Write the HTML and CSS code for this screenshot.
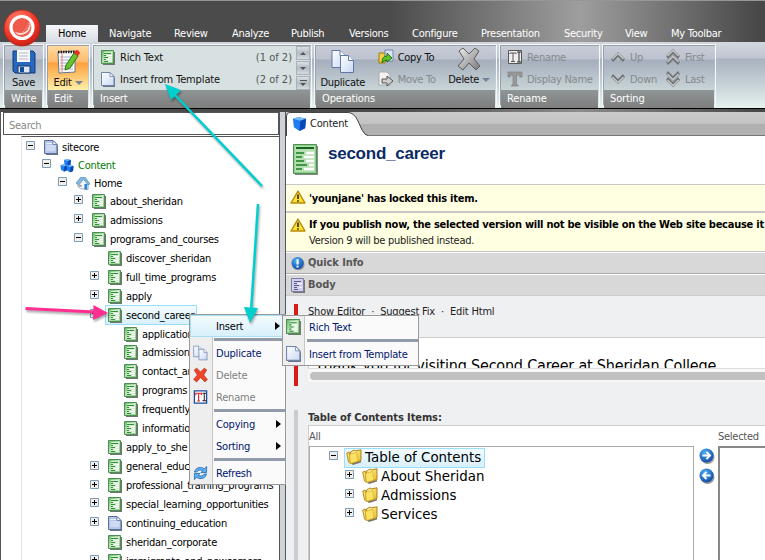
FILE: index.html
```
<!DOCTYPE html>
<html lang="en">
<head>
<meta charset="utf-8">
<title>Content Editor</title>
<link rel="stylesheet" href="styles.css">
</head>
<body>
<svg class="defs" aria-hidden="true">
  <defs>
    <linearGradient id="gGreen" x1="0" y1="0" x2="1" y2="1"><stop offset="0" stop-color="#5fb860"/><stop offset=".45" stop-color="#b9e2b5"/><stop offset="1" stop-color="#8cc98a"/></linearGradient>
    <linearGradient id="gPage" x1="0" y1="0" x2="1" y2="1"><stop offset="0" stop-color="#fff"/><stop offset="1" stop-color="#c9d8f2"/></linearGradient>
    <linearGradient id="gFolder" x1="0" y1="0" x2="1" y2="1"><stop offset="0" stop-color="#fff6a8"/><stop offset="1" stop-color="#e8b71c"/></linearGradient>
    <linearGradient id="gMetal" x1="0" y1="0" x2="1" y2="1"><stop offset="0" stop-color="#f0f0f0"/><stop offset="1" stop-color="#777"/></linearGradient>
    <radialGradient id="gBall" cx=".4" cy=".3" r=".8"><stop offset="0" stop-color="#4fb2f5"/><stop offset="1" stop-color="#083f9e"/></radialGradient>
    <radialGradient id="gRed" cx=".4" cy=".3" r=".8"><stop offset="0" stop-color="#ff8d78"/><stop offset=".6" stop-color="#f03526"/><stop offset="1" stop-color="#b81610"/></radialGradient>
    <symbol id="doc" viewBox="0 0 14 15"><path d="M2 2h12v13H2z" fill="#6d756d"/><path d="M.5.5h12v13H.5z" fill="url(#gGreen)" stroke="#4f8e54"/><path d="M3 2h8v10H3z" fill="#d5ecd1"/><path d="M3 3.500h7M3 5.500h2M3 7.500h4M3 9.500h2M3 11.500h4" stroke="#2c9139"/><path d="M6 5.500h5M8 7.500h3M6 9.500h5M8 11.500h3" stroke="#fff"/></symbol>
    <symbol id="bigdoc" viewBox="0 0 25 31"><path d="M2 2h23v29H2z" fill="#858a85"/><path d="M.5.5h23v29H.5z" fill="#b5dfb0" stroke="#4b9153"/><path d="M1.500 1.500h21v27h-21z" fill="none" stroke="#8fce8a"/><path d="M3 4h18" stroke="#14651d" stroke-width="2"/><path d="M3 9h8M3 13h6M3 17h8M3 21h11M3 25h6" stroke="#17811f" stroke-width="1.300"/><path d="M13 9h8M11 13h10M13 17h8M16 21h5M11 25h10" stroke="#fff" stroke-width="2.600"/></symbol>
    <symbol id="violet" viewBox="0 0 14 15"><path d="M2 2h12v13H2z" fill="#777"/><path d="M.5.5h12v13H.5z" fill="#d0d0ea" stroke="#7c7ca5"/><path d="M3 3.500h7M3 5.500h3M3 7.500h5M3 9.500h3M3 11.500h4" stroke="#5c5c8c"/><path d="M7 5.500h4M8 9.500h3" stroke="#fff"/></symbol>
    <symbol id="page" viewBox="0 0 14 15"><path d="M2 2h9l3 4v9H2z" fill="#6c7485"/><path d="M.5.5H9l4 4v9H.5z" fill="url(#gPage)" stroke="#7184a8"/><path d="M9 .5v4h4z" fill="#fff" stroke="#7184a8" stroke-width=".8"/></symbol>
    <symbol id="bluepage" viewBox="0 0 14 15"><path d="M2 2h9l3 4v9H2z" fill="#6c7485"/><path d="M.5.5H9l4 4v9H.5z" fill="#b5c6e8" stroke="#5a6e9a"/><path d="M2.500 3.500H8M2.500 6h9M2.500 8h9M2.500 10h9" stroke="#e8effb"/><path d="M9 .5v4h4z" fill="#fff" stroke="#5a6e9a" stroke-width=".8"/></symbol>
    <symbol id="cube" viewBox="0 0 16 16"><path d="M1 3l6-2 8 2-1 10-6 3-6-4z" fill="#1c7cf0"/><path d="M1 3l6-2 8 2-6 2z" fill="#77bdfc"/><path d="M9 5l6-2-1 10-6 3z" fill="#0847b5"/></symbol>
    <symbol id="house" viewBox="0 0 15 15"><path d="M2 7l6-5 5 5v7l-8-1-3-2z" fill="#f5f7fa" stroke="#8b98a8" stroke-width=".8"/><path d="M0 7l5-6 5 0 5 7-2 1-5-6-5 6z" fill="#83b8e5" stroke="#567fae" stroke-width=".7"/><path d="M9 8h3v6H9z" fill="#2c83d8"/><path d="M3 9h3v2H3z" fill="#999"/></symbol>
    <symbol id="plus" viewBox="0 0 9 9"><path d="M.5.5h8v8h-8z" fill="#f0eee8" stroke="#7f9bb8"/><path d="M2 4.500h5M4.500 2v5" stroke="#000"/></symbol>
    <symbol id="minus" viewBox="0 0 9 9"><path d="M.5.5h8v8h-8z" fill="#f0eee8" stroke="#7f9bb8"/><path d="M2 4.500h5" stroke="#000"/></symbol>
    <symbol id="folder" viewBox="0 0 16 16"><path d="M5 14.500l10-2.500v1.500L7 16z" fill="#777"/><path d="M.7 4L3.200 3l1.300 11.500L2.500 13z" fill="#f7dc6a" stroke="#a6780b" stroke-width=".8"/><path d="M4.500 3l3.500-2 1.500.8L15 .8v10.700L5.500 14.500z" fill="url(#gFolder)" stroke="#a6780b" stroke-width=".9"/><path d="M3.500 5.500l7-2 1.500 8.500-7.500 2.500z" fill="#fbe262" stroke="#d2a725" stroke-width=".6"/></symbol>
    <symbol id="warn" viewBox="0 0 16 15"><path d="M8 1.200L15 13H1z" fill="#fbe22b" stroke="#b98a0d" stroke-width="1.400" stroke-linejoin="round"/><path d="M8 4.500v4.500M8 10.300v1.500" stroke="#222" stroke-width="1.600"/></symbol>
    <symbol id="dup" viewBox="0 0 24 24"><g stroke="#5e79a6" fill="url(#gPage)"><path d="M1 1h8l5 5v12H1z"/><path d="M9 1v5h5" fill="#fff"/><path d="M9.500 6h8l5 5v12h-13z"/><path d="M17.500 6v5h5" fill="#fff"/></g></symbol>
    <symbol id="cross" viewBox="0 0 24 24"><path d="M2 4l4-3 6 6 6-6 4 3-5 8 6 7-4 4-7-7-6 7-5-4 6-7z" stroke-width="1"/></symbol>
    <symbol id="chev" viewBox="0 0 14 10"><path d="M0 7l7-7 7 7-2 3-5-5-5 5z" fill="#707478"/><path d="M1.500 7L7 1.500 12.500 7" fill="none" stroke="#ccc" stroke-width="1.300"/></symbol>
    <symbol id="ball" viewBox="0 0 16 16"><circle cx="8.500" cy="9" r="7" fill="#999"/><circle cx="7.500" cy="7.500" r="7" fill="url(#gBall)"/></symbol>
    <symbol id="tri" viewBox="0 0 5 8"><path d="M0 0l5 4-5 4z" fill="#000"/></symbol>
  </defs>
</svg>

<header class="top">
  <nav class="tabs">
    <span class="tab on">Home</span><span class="tab">Navigate</span><span class="tab">Review</span><span class="tab">Analyze</span><span class="tab">Publish</span><span class="tab">Versions</span><span class="tab">Configure</span><span class="tab">Presentation</span><span class="tab">Security</span><span class="tab">View</span><span class="tab">My Toolbar</span>
  </nav>
  <svg class="logo" viewBox="0 0 38 38"><circle cx="19" cy="19" r="18" fill="url(#gRed)" stroke="#a5251b" stroke-width=".7"/><circle cx="19" cy="18.500" r="11" fill="#ee5b4c" stroke="#fff" stroke-width="3.200"/><path d="M27 11q3 13-9 15-4 0-6-3 9 3 13-3 2-4 2-9z" fill="#fff" opacity=".8"/><path d="M20 23l4-4 2-5" fill="none" stroke="#f6b7ad" stroke-dasharray="1.500 1"/></svg>
</header>

<section class="ribbon">
  <div class="chunk write">
    <div class="chunk-body center">
      <svg class="big" viewBox="0 0 24 25"><path d="M1 2h20l2 2v20H3l-2-2z" fill="#2767bd" stroke="#123b7b"/><path d="M5 1h13v12H5z" fill="#f4f6f8"/><path d="M7 4h9M7 7h9M7 10h9" stroke="#b5bbc4"/><path d="M6 17h12v7H6z" fill="#dce4ee" stroke="#12396f"/><path d="M8 18h4v5H8z" fill="#164c9a"/></svg>
      <span>Save</span>
    </div>
    <div class="chunk-label">Write</div>
  </div>
  <div class="chunk edit">
    <div class="chunk-body center">
      <svg class="big" viewBox="0 0 24 25"><path d="M2 3l17-1v21l-16 1z" fill="#fff" stroke="#65758f"/><path d="M4 8h13M4 11h13M4 14h13M4 17h13M4 20h13" stroke="#9ab0d5"/><path d="M6 3v20" stroke="#e77"/><path d="M2 3h17" stroke="#222" stroke-width="2.500" stroke-dasharray="1.500 1"/><path d="M10 16l8-12 4 3-8 12-5 2z" fill="#66c430" stroke="#2b7512"/><path d="M18 4l2-3q3 0 4 3l-2 3z" fill="#e33323"/></svg>
      <span class="drop">Edit</span>
    </div>
    <div class="chunk-label">Edit</div>
  </div>
  <div class="chunk insert">
    <div class="chunk-body list">
      <div class="options">
        <div class="opt"><svg><use href="#doc"/></svg><span>Rich Text</span><i>(1 of 2)</i></div>
        <div class="opt"><svg><use href="#page"/></svg><span>Insert from Template</span><i>(2 of 2)</i></div>
      </div>
      <div class="scroller"><b class="up"></b><b class="down"></b><b class="more"></b></div>
    </div>
    <div class="chunk-label">Insert</div>
  </div>
  <div class="chunk ops">
    <div class="chunk-body">
      <div class="tall duplicate"><svg class="big"><use href="#dup"/></svg><span>Duplicate</span></div>
      <div class="pair">
        <div><svg viewBox="0 0 16 16"><path d="M1 4h6v10H1z" fill="#f3d145" stroke="#a57c0c"/><path d="M7 1h8v11H7z" fill="#dbe5fa" stroke="#7184a8"/><path d="M4 14q0-7 5-7V4l5 5-5 4v-2q-3 0-5 3z" fill="#5cc42b" stroke="#277511"/></svg><span>Copy To</span></div>
        <div class="off"><svg viewBox="0 0 16 16"><path d="M1 1h8l3 3v10H1z" fill="#f2f2f2" stroke="#aaa"/><path d="M4 8h5V5l6 5-6 5v-3H4z" fill="#ccc" stroke="#555"/></svg><span>Move To</span></div>
      </div>
      <div class="tall delete"><svg class="big" fill="url(#gMetal)" stroke="#5d5d5d"><use href="#cross"/></svg><span class="drop">Delete</span></div>
    </div>
    <div class="chunk-label">Operations</div>
  </div>
  <div class="chunk rename">
    <div class="chunk-body">
      <div class="pair">
        <div class="off"><svg viewBox="0 0 16 16"><path d="M1.500 1.500h13v13h-13z" fill="#eee" stroke="#555"/><path d="M3 5V4h6v1M6 4v8M4 12.500h4" fill="none" stroke="#555"/><path d="M10 3h4M12 3v10M10 13h4" stroke="#222" fill="none"/></svg><span>Rename</span></div>
        <div class="off"><svg viewBox="0 0 16 16"><path d="M1 1h14v5h-2l-1-2H9.500v9l2 2H4l2-2V4H4L3 6H1z" fill="#999" stroke="#777" stroke-width=".6"/></svg><span>Display Name</span></div>
      </div>
    </div>
    <div class="chunk-label">Rename</div>
  </div>
  <div class="chunk sorting">
    <div class="chunk-body">
      <div class="pair">
        <div class="off"><svg viewBox="0 0 16 16"><use href="#chev" x="1" y="3" width="14" height="10"/></svg><span>Up</span></div>
        <div class="off"><svg class="flip" viewBox="0 0 16 16"><use href="#chev" x="1" y="3" width="14" height="10"/></svg><span>Down</span></div>
      </div>
      <div class="pair">
        <div class="off"><svg viewBox="0 0 16 16"><use href="#chev" x="1" y="0" width="14" height="10"/><use href="#chev" x="1" y="6" width="14" height="10"/></svg><span>First</span></div>
        <div class="off"><svg class="flip" viewBox="0 0 16 16"><use href="#chev" x="1" y="0" width="14" height="10"/><use href="#chev" x="1" y="6" width="14" height="10"/></svg><span>Last</span></div>
      </div>
    </div>
    <div class="chunk-label">Sorting</div>
  </div>
</section>
<div class="strip"></div>

<main class="work">
  <aside class="left">
    <div class="search">Search</div>
    <div class="tree">
      <div class="node l0 s"><svg class="ex"><use href="#minus"/></svg><svg class="ic"><use href="#bluepage"/></svg><span>sitecore</span></div>
      <div class="node l1 s"><svg class="ex"><use href="#minus"/></svg><svg class="ic" viewBox="0 0 16 16"><use href="#cube" x="4" y="0" width="9" height="9"/><use href="#cube" x="0" y="6" width="9" height="9"/><use href="#cube" x="7" y="7" width="9" height="9"/></svg><span class="green">Content</span></div>
      <div class="node l2 s"><svg class="ex"><use href="#minus"/></svg><svg class="ic"><use href="#house"/></svg><span>Home</span></div>
      <div class="node l3"><svg class="ex"><use href="#plus"/></svg><svg class="ic"><use href="#doc"/></svg><span>about_sheridan</span></div>
      <div class="node l3"><svg class="ex"><use href="#plus"/></svg><svg class="ic"><use href="#doc"/></svg><span>admissions</span></div>
      <div class="node l3"><svg class="ex"><use href="#minus"/></svg><svg class="ic"><use href="#doc"/></svg><span>programs_and_courses</span></div>
      <div class="node l4"><svg class="ex"></svg><svg class="ic"><use href="#doc"/></svg><span>discover_sheridan</span></div>
      <div class="node l4"><svg class="ex"><use href="#plus"/></svg><svg class="ic"><use href="#doc"/></svg><span>full_time_programs</span></div>
      <div class="node l4"><svg class="ex"><use href="#plus"/></svg><svg class="ic"><use href="#doc"/></svg><span>apply</span></div>
      <div class="node l4 sel"><svg class="ex"><use href="#minus"/></svg><div class="hot"><svg class="ic"><use href="#doc"/></svg><span>second_career</span></div></div>
      <div class="node l5"><svg class="ex"></svg><svg class="ic"><use href="#doc"/></svg><span>application</span></div>
      <div class="node l5"><svg class="ex"></svg><svg class="ic"><use href="#doc"/></svg><span>admission_</span></div>
      <div class="node l5"><svg class="ex"></svg><svg class="ic"><use href="#doc"/></svg><span>contact_and</span></div>
      <div class="node l5"><svg class="ex"></svg><svg class="ic"><use href="#doc"/></svg><span>programs</span></div>
      <div class="node l5"><svg class="ex"></svg><svg class="ic"><use href="#doc"/></svg><span>frequently</span></div>
      <div class="node l5"><svg class="ex"></svg><svg class="ic"><use href="#doc"/></svg><span>information</span></div>
      <div class="node l4"><svg class="ex"></svg><svg class="ic"><use href="#doc"/></svg><span>apply_to_she</span></div>
      <div class="node l4"><svg class="ex"><use href="#plus"/></svg><svg class="ic"><use href="#doc"/></svg><span>general_educ</span></div>
      <div class="node l4"><svg class="ex"><use href="#plus"/></svg><svg class="ic"><use href="#doc"/></svg><span>professional_training_programs</span></div>
      <div class="node l4"><svg class="ex"><use href="#plus"/></svg><svg class="ic"><use href="#doc"/></svg><span>special_learning_opportunities</span></div>
      <div class="node l4"><svg class="ex"><use href="#plus"/></svg><svg class="ic"><use href="#bluepage"/></svg><span>continuing_education</span></div>
      <div class="node l4"><svg class="ex"></svg><svg class="ic"><use href="#doc"/></svg><span>sheridan_corporate</span></div>
      <div class="node l4"><svg class="ex"><use href="#plus"/></svg><svg class="ic"><use href="#doc"/></svg><span>immigrants_and_newcomers</span></div>
    </div>
  </aside>
  <div class="splitter"></div>
  <section class="right">
    <div class="tabbar">
      <svg class="tabshape" viewBox="0 0 84 24"><path d="M.5 24V4Q.5.5 4 .5H62Q68 .5 72 9L76 18Q79 23.500 82 23.500V24z" fill="#fff"/><path d="M.5 24V4Q.5.5 4 .5H62Q68 .5 72 9L76 18Q79 23.500 82 23.500" fill="none" stroke="#444"/></svg>
      <div class="tabtext"><svg><use href="#cube"/></svg><span>Content</span></div>
    </div>
    <div class="title"><svg><use href="#bigdoc"/></svg><h1>second_career</h1></div>
    <div class="note one"><svg><use href="#warn"/></svg><strong>'younjane' has locked this item.</strong></div>
    <div class="note two"><svg><use href="#warn"/></svg><div><strong>If you publish now, the selected version will not be visible on the Web site because it</strong><p>Version 9 will be published instead.</p></div></div>
    <div class="bar quick"><svg viewBox="0 0 16 16"><use href="#ball"/><path d="M7.500 3v6M7.500 10.500v2" stroke="#fff" stroke-width="2.400"/></svg>Quick Info</div>
    <div class="bar body"><svg><use href="#violet"/></svg>Body</div>
    <div class="field rich">
      <div class="links"><span>Show Editor</span><span>·</span><span>Suggest Fix</span><span>·</span><span>Edit Html</span></div>
      <div class="editor">Thank you for visiting Second Career at Sheridan College</div>
      <div class="hscroll"><div class="thumb"></div></div>
    </div>
    <div class="field toc">
      <div class="flabel">Table of Contents Items:</div>
      <div class="picker">
        <div class="all">
          <div class="cap">All</div>
          <div class="box">
            <div class="tnode root"><svg class="ex"><use href="#minus"/></svg><div class="thot"><svg class="fo"><use href="#folder"/></svg><span>Table of Contents</span></div></div>
            <div class="tnode"><svg class="ex"><use href="#plus"/></svg><svg class="fo"><use href="#folder"/></svg><span>About Sheridan</span></div>
            <div class="tnode"><svg class="ex"><use href="#plus"/></svg><svg class="fo"><use href="#folder"/></svg><span>Admissions</span></div>
            <div class="tnode"><svg class="ex"><use href="#plus"/></svg><svg class="fo"><use href="#folder"/></svg><span>Services</span></div>
          </div>
        </div>
        <div class="moves">
          <svg viewBox="0 0 16 16"><use href="#ball"/><path d="M3.500 7.500h7M7.500 4l3.500 3.500L7.500 11" fill="none" stroke="#fff" stroke-width="1.900"/></svg>
          <svg viewBox="0 0 16 16"><use href="#ball"/><path d="M11.500 7.500h-7M7.500 4L4 7.500 7.500 11" fill="none" stroke="#fff" stroke-width="1.900"/></svg>
        </div>
        <div class="chosen"><div class="cap">Selected</div><div class="box"></div></div>
      </div>
    </div>
  </section>
</main>

<div class="menu main-menu">
  <div class="item hover"><em></em><span>Insert</span><svg class="tri"><use href="#tri"/></svg></div>
  <div class="sep"></div>
  <div class="item"><em><svg><use href="#dup"/></svg></em><span>Duplicate</span></div>
  <div class="item dis"><em><svg fill="#ee4427" stroke="#a3200e"><use href="#cross"/></svg></em><span>Delete</span></div>
  <div class="item dis"><em><svg viewBox="0 0 16 16"><path d="M1.500 1.500h13v13h-13z" fill="#fff" stroke="#1d4d9f" stroke-width="1.400"/><path d="M3 6V4h6v2M6 4v8M4.500 12.200h3" fill="none" stroke="#e22" stroke-width="1.200"/><path d="M10 4h4M12 4v8M10 12h4" stroke="#111" fill="none"/></svg></em><span>Rename</span></div>
  <div class="sep"></div>
  <div class="item"><em></em><span>Copying</span><svg class="tri"><use href="#tri"/></svg></div>
  <div class="item"><em></em><span>Sorting</span><svg class="tri"><use href="#tri"/></svg></div>
  <div class="sep"></div>
  <div class="item"><em><svg viewBox="0 0 16 16"><path d="M1.500 7Q3 2 8 2q2.500 0 4 1.500L14.500 1v6.500H8.500L10.500 5.500Q6 3.500 4 7z" fill="#5fb0f0" stroke="#1c62ac" stroke-width=".8"/><path d="M14.500 9Q13 14 8 14q-2.500 0-4-1.500L1.500 15V8.500H7.500L5.500 10.500Q10 12.500 12 9z" fill="#5fb0f0" stroke="#1c62ac" stroke-width=".8"/></svg></em><span>Refresh</span></div>
</div>
<div class="menu sub-menu">
  <div class="item"><em><svg><use href="#doc"/></svg></em><span>Rich Text</span></div>
  <div class="sep"></div>
  <div class="item"><em><svg><use href="#page"/></svg></em><span>Insert from Template</span></div>
</div>

<svg class="arrows" viewBox="0 0 765 560">
  <g stroke="#00cfd0" stroke-width="2.500" fill="#00cfd0"><path d="M262 186L172 92"/><path d="M165 84l16 6-10 10z" stroke="none"/><path d="M258 204L251 312"/><path d="M250 323l-6-16 14 1z" stroke="none"/></g>
  <g fill="#ff2f92" stroke="#ff2f92"><path d="M25.500 308.500L95 312" stroke-width="2.800"/><path d="M108 313l-15 7 .5-15z" stroke="none"/></g>
</svg>
</body>
</html>
```
FILE: styles.css
```
* { box-sizing: border-box; }
html, body { margin: 0; height: 560px; overflow: hidden; }
body {
  position: relative;
  width: 765px;
  display: flex;
  flex-direction: column;
  font: 11px/14px "DejaVu Sans Condensed", "DejaVu Sans", sans-serif;
  font-stretch: condensed;
  letter-spacing: -0.27px;
  color: #000;
  background: #fff;
  white-space: nowrap;
}
svg { display: block; flex: none; overflow: visible; }
.defs { position: absolute; width: 0; height: 0; }

.top {
  height: 42px;
  flex: none;
  padding: 24px 0 0 46px;
  border-top: 1px solid #969696;
  background: linear-gradient(90deg, #4b4b4b 0, #4b4b4b 390px, #9e9e9e 580px, #484848 758px);
}
.tabs { display: grid; height: 17px; grid-template-columns: 52px 65px 58px 59px 58px 63px 69px 83px 61px 46px 60px; color: #fff; }
.tab { line-height: 17px; padding-left: 11px; }
.tab.on { color: #000; background: linear-gradient(#f6f7f9, #d9dde4); padding-left: 12px; }
.logo { position: absolute; left: 3px; top: 9px; width: 38px; height: 38px; }

.ribbon {
  height: 66px;
  flex: none;
  display: flex;
  gap: 2px;
  padding: 2px 0 0 3px;
  background: linear-gradient(#d2d7df 0, #c0c6d1 16px, #a9b2bf 17px, #c3ced4 40px, #e6f2ef 66px);
}
.chunk { height: 62px; border: 1px solid #f5f8f8; display: flex; flex-direction: column; box-shadow: inset 1px 1px #9ba0a6; padding: 1px; }
.write { width: 41px; }
.edit { width: 44px; }
.insert { width: 220px; }
.ops { width: 183px; }
.rename { width: 101px; }
.sorting { width: 114px; }
.chunk-body { height: 44px; display: flex; background: linear-gradient(#c8ccd7, #bcc2ce 13px, #a5aebc 14px, #c9d4d7); }
.center { flex-direction: column; align-items: center; }
.edit .chunk-body { background: linear-gradient(#ffd9a0, #fdbb6c 16px, #fc9f3b 17px, #fff0a8); }
.chunk-label { flex: 1; color: #fff; line-height: 18px; padding-left: 6px; background: linear-gradient(#8f9595, #7e7e7e); letter-spacing: -0.15px; }
.big { width: 24px; height: 25px; margin: 3px 0 2px; }
.center span { color: #111; }
.drop::after { content: ""; display: inline-block; margin-left: 3px; border: 4px solid transparent; border-top-color: #74829b; border-bottom: 0; vertical-align: 1px; }
.insert .chunk-body { background: #d8e1e1; }
.options { width: 198px; padding-left: 7px; }
.opt { height: 22px; display: flex; align-items: center; color: #111; letter-spacing: -.13px; }
.opt svg { width: 14px; height: 15px; margin-right: 5px; }
.opt span, .opt i, .pair span { padding-top: 1px; }
.opt i { margin-left: auto; font-style: normal; color: #555; letter-spacing: 0; }
.scroller { margin-left: 4px; width: 14px; display: flex; flex-direction: column; gap: 1px; }
.scroller b { flex: 1; border: 1px solid #aab0b7; background: linear-gradient(#dce0e5, #b4bbc4 50%, #d3dcdd); display: grid; place-items: center; }
.scroller b::before { content: ""; border: 3px solid transparent; border-top-color: #555; border-bottom: 0; }
.scroller .up::before { transform: scaleY(-1); }
.scroller .more { align-content: center; gap: 2px; }
.scroller .more::before { order: 2; }
.scroller .more::after { content: ""; width: 7px; height: 1px; background: #555; }
.tall { display: flex; flex-direction: column; align-items: center; color: #111; }
.duplicate { width: 54px; }
.delete { width: 52px; margin-left: 5px; }
.delete .big { height: 24px; margin: 1px 0 2px; }
.pair { padding-left: 7px; }
.ops .pair { width: 69px; padding-left: 8px; }
.pair div { height: 22px; display: flex; align-items: center; gap: 4px; color: #111; }
.pair svg { width: 16px; height: 16px; }
.pair .off { color: #85898d; }
.rename .pair, .sorting .pair { padding-left: 6px; }
.flip { transform: scaleY(-1); }
.sorting .pair { width: 59px; }
.strip { height: 4px; flex: none; border-top: 1px solid #000; background: linear-gradient(90deg, #4b4b4b 0, #4b4b4b 390px, #8c8c8c 580px, #484848 758px); }

.work { flex: 1; display: flex; min-height: 0; overflow: hidden; }
.left { width: 279px; border-left: 1px solid #555; overflow: hidden; }
.search { height: 23px; margin: 0 0 0 2px; border: 1px solid #555; line-height: 25px; padding-left: 5px; color: #888; background: #fff; }
.tree { margin-left: 20px; border-left: 1px solid #e2e2e2; border-top: 1px solid #555; margin-top: 1px; height: 425px; padding-top: 1px; }
.node { height: 18.95px; display: flex; align-items: center; }
.node.s { height: 18px; }
.l0 { padding-left: 4px; }
.l1 { padding-left: 20px; }
.l2 { padding-left: 36px; }
.l3 { padding-left: 52px; }
.l4 { padding-left: 68px; }
.l5 { padding-left: 84px; }
.ex { width: 9px; height: 9px; margin: 0 9px 3px 0; }
.ic { width: 14px; height: 15px; margin-right: 4px; }
.node span { padding-top: 1px; }
.green { color: #007a00; }
.hot { height: 20px; margin: 0 0 0 -3px; padding: 0 2px; border: 1px solid #99defd; background: linear-gradient(#f3fbff, #d8f0fb); display: flex; align-items: center; }

.splitter { width: 7px; background: #d0d2d9; border-left: 1px solid #555; border-right: 1px solid #555; }
.right { flex: 1; min-width: 0; background: #eff0f2; }
.tabbar { position: relative; height: 24px; background: linear-gradient(#cbcbcb, #c2c2c2 12px, #afafaf 12px, #b2b2b2); border-bottom: 1px solid #777; }
.tabshape { position: absolute; left: 0; top: 0; width: 84px; height: 24px; }
.tabtext { position: relative; display: flex; align-items: center; height: 23px; padding-left: 6px; gap: 3px; color: #222; letter-spacing: -.2px; }
.tabtext svg { width: 15px; height: 15px; }
.title { height: 48px; display: flex; background: #fff; padding: 8px 0 0 7px; }
.title svg { width: 25px; height: 31px; }
h1 { margin: 0 0 0 10px; font: bold 17px/19px "Liberation Sans", Arial, sans-serif; color: #0b2b66; letter-spacing: -.25px; }
.note { background: #ffffe1; border-top: 1px solid #c6c6c6; display: flex; }
.note svg { width: 16px; height: 15px; margin: 5px 3px 0 4px; }
.note.one { height: 27px; line-height: 27px; }
.note.two { height: 41px; border-top-width: 2px; border-bottom: 1px solid #c6c6c6; padding-top: 5px; }
.note.two svg { margin-top: 0; }
.note p { margin: 2px 0 0; color: #222; }
strong { letter-spacing: -0.25px; }
.bar { height: 22px; border-top: 1px solid #fff; border-bottom: 1px solid #aaa; background: #d8d8d8; display: flex; align-items: center; font-weight: bold; color: #555; padding-left: 5px; letter-spacing: -.1px; }
.bar svg { width: 14px; height: 15px; margin-right: 3px; }
.bar.body { border-bottom-color: #ccc; }
.field { margin-left: 8px; border-left: 4px solid #ccc; padding-left: 10px; }
.rich { margin-top: 8px; height: 82px; border-color: #d71a12; }
.links { display: flex; gap: 6px; height: 33px; padding-top: 1px; color: #222; letter-spacing: -.18px; }
.editor { height: 31px; border: 1px solid #ccc; border-right: 0; border-bottom: 0; background: #fff; overflow: hidden; font-size: 16px; line-height: 24px; padding: 16px 0 0 6px; letter-spacing: -.2px; }
.hscroll { height: 14px; background: #f7f7f7; border-top: 1px solid #ddd; padding: 3px 0 0 2px; }
.thumb { height: 8px; border-radius: 4px 0 0 4px; background: #c1c1c1; }
.toc { margin-top: 24px; height: 160px; }
.flabel { height: 15px; line-height: 15px; font-weight: bold; color: #333; letter-spacing: -.1px; }
.picker { height: 140px; display: flex; background: #fff; border: 1px solid #ccc; border-right: 0; }
.cap { height: 20px; line-height: 21px; color: #555; }
.all { width: 385px; }
.all .box { height: 130px; border: 1px solid #aaa; padding: 1px 0 0 19px; }
.tnode { height: 19px; display: flex; align-items: center; font: 13.4px/18px "DejaVu Sans", sans-serif; letter-spacing: 0; padding-left: 16px; }
.tnode.root { padding-left: 0; }
.tnode span { padding-top: 1px; }
.tnode .ex { margin: 0 8px 4px 0; }
.fo { width: 16px; height: 16px; margin: 0 3px 2px 0; }
.thot { height: 20px; display: flex; align-items: center; border: 1px solid #99defd; background: linear-gradient(#f3fbff, #d8f0fb); margin-left: -2px; padding: 0 3px 0 1px; }
.moves { width: 24px; padding: 22px 0 0 5px; display: grid; gap: 4px; align-content: start; }
.moves svg { width: 16px; height: 16px; }
.chosen { flex: 1; }
.chosen .box { height: 130px; border: 2px solid #888; border-right: 0; }

.menu { position: absolute; background: #fafafa; border: 1px solid #999; color: #00156e; letter-spacing: -.2px; }
.main-menu { left: 189px; top: 314px; width: 97px; height: 171px; background: linear-gradient(90deg, #eee 22px, #c5c5c5 22px, #c5c5c5 23px, #fafafa 23px); }
.sub-menu { left: 282px; top: 315px; width: 137px; height: 51px; background: linear-gradient(90deg, #eee 21px, #c5c5c5 21px, #c5c5c5 22px, #fafafa 22px); }
.item { height: 22px; display: flex; align-items: center; }
.item span { padding-top: 2px; }
.item em { width: 26px; padding-left: 3px; }
.item em svg { width: 15px; height: 16px; }
.tri { width: 5px; height: 8px; margin-left: auto; margin-right: 4px; }
.hover { border: 1px solid #a8dff8; background: linear-gradient(#f3fbff, #d8f0fb); color: #000; }
.main-menu .hover em { width: 25px; }
.dis { color: #808080; }
.sep { height: 3px; margin: 1px 0 1px 24px; background: #919baa; }
.arrows { position: absolute; left: 0; top: 0; width: 765px; height: 560px; pointer-events: none; filter: drop-shadow(1px 2px 1px rgba(0,0,0,.35)); }
```
